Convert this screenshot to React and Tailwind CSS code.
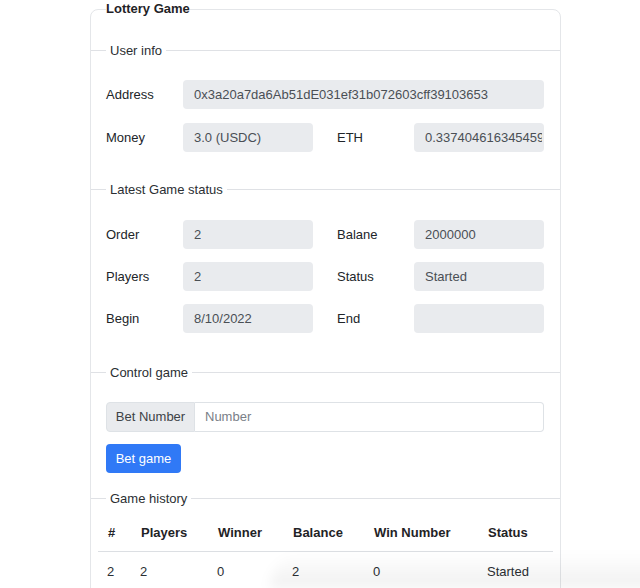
const font = { fontFamily: '"Liberation Sans", Arial, sans-serif' };

function Legend({ children }) {
  return (
    <div className="flex items-center h-[16px]">
      <div className="w-[15px] border-t border-[#dfe1e5]" />
      <span className="px-[4px] text-[13px] text-[#2b2f33] leading-none">{children}</span>
      <div className="flex-1 border-t border-[#dfe1e5]" />
    </div>
  );
}

function Field({ value, className = "" }) {
  return (
    <div
      className={`h-[29px] rounded-[4px] bg-[#e9ebee] pl-[11px] pr-[2px] flex items-center text-[13px] text-[#4a4f55] overflow-hidden whitespace-nowrap ${className}`}
    >
      <span className="overflow-hidden">{value}</span>
    </div>
  );
}

function Pair({ label, value, label2, value2 }) {
  return (
    <div className="flex items-center">
      <div className="w-[77px] text-[13px] text-[#212529]">{label}</div>
      <Field value={value} className="w-[130px]" />
      <div className="w-[24px]" />
      <div className="w-[77px] text-[13px] text-[#212529]">{label2}</div>
      <Field value={value2} className="w-[130px]" />
    </div>
  );
}

export default function App() {
  const cols = [
    { h: "#", w: "w-[33px]", v: "2" },
    { h: "Players", w: "w-[77px]", v: "2" },
    { h: "Winner", w: "w-[75px]", v: "0" },
    { h: "Balance", w: "w-[81px]", v: "2" },
    { h: "Win Number", w: "w-[114px]", v: "0" },
    { h: "Status", w: "flex-1", v: "Started" },
  ];

  return (
    <div className="relative w-[640px] h-[588px] overflow-hidden bg-white" style={font}>
      <div className="absolute left-[106px] top-[1px] text-[13px] font-bold text-[#1f2326] bg-white z-10 leading-[16px]">
        Lottery Game
      </div>
      <div className="ml-[90px] mt-[9px] w-[471px] h-[620px] border border-[#e4e6e9] rounded-[8px] pt-[32px]">
        <Legend>User info</Legend>
        <div className="pl-[15px] pt-[22px] flex flex-col gap-[14px]">
          <div className="flex items-center">
            <div className="w-[77px] text-[13px] text-[#212529]">Address</div>
            <Field value="0x3a20a7da6Ab51dE031ef31b072603cff39103653" className="w-[361px]" />
          </div>
          <Pair label="Money" value="3.0 (USDC)" label2="ETH" value2="0.33740461634545973" />
        </div>

        <div className="mt-[29px]">
          <Legend>Latest Game status</Legend>
        </div>
        <div className="pl-[15px] pt-[23px] flex flex-col gap-[13px]">
          <Pair label="Order" value="2" label2="Balane" value2="2000000" />
          <Pair label="Players" value="2" label2="Status" value2="Started" />
          <Pair label="Begin" value="8/10/2022" label2="End" value2="" />
        </div>

        <div className="mt-[31px]">
          <Legend>Control game</Legend>
        </div>
        <div className="pl-[15px] pt-[22px]">
          <div className="flex w-[438px] h-[30px]">
            <div className="w-[89px] bg-[#e9ebee] border border-[#dee2e6] rounded-l-[4px] flex items-center justify-center text-[13px] text-[#3d4246]">
              Bet Number
            </div>
            <div className="flex-1 border border-l-0 border-[#dee2e6] rounded-r-[4px] flex items-center pl-[10px] text-[13px] text-[#7a8087]">
              Number
            </div>
          </div>
          <button className="mt-[12px] w-[75px] h-[29px] rounded-[4px] bg-[#3079f6] text-white text-[13px]">
            Bet game
          </button>
        </div>

        <div className="mt-[17px]">
          <Legend>Game history</Legend>
        </div>
        <div className="mx-[7px] mt-[8px]">
          <div className="flex h-[38px] items-center border-b border-[#dcdfe3] text-[13px] font-bold text-[#1f2326] pl-[10px]">
            {cols.map((c) => (
              <div key={c.h} className={c.w}>{c.h}</div>
            ))}
          </div>
          <div className="flex h-[40px] items-center text-[13px] text-[#2b2f33] pl-[9px]">
            {cols.map((c) => (
              <div key={c.h} className={c.w}>{c.v}</div>
            ))}
          </div>
        </div>
      </div>
      <div className="absolute left-[270px] bottom-0 w-[400px] h-[36px] bg-gradient-to-t from-black/[0.06] to-transparent rounded-tl-[40px] blur-[6px]" />
    </div>
  );
}
